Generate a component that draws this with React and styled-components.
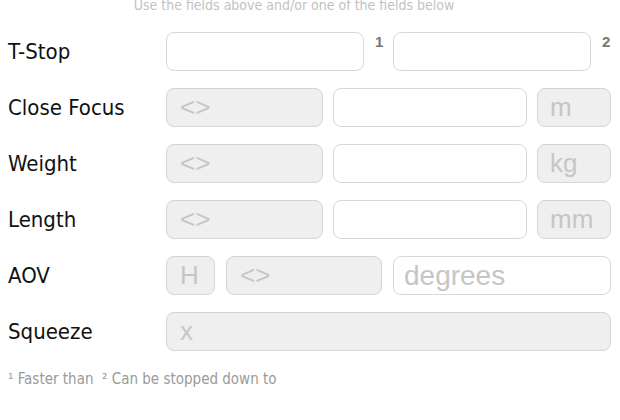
import React from "react";
import styled, { createGlobalStyle } from "styled-components";

const GlobalStyle = createGlobalStyle`
  html, body {
    margin: 0;
    padding: 0;
    background: #ffffff;
    overflow: hidden;
  }
`;

const labelFont = `"DejaVu Sans Condensed", "Liberation Sans", sans-serif`;
const fieldFont = `"Liberation Sans", Arial, sans-serif`;

const Page = styled.div`
  width: 620px;
  height: 420px;
  box-sizing: border-box;
  padding: 0 8px;
  font-family: ${labelFont};
  overflow: hidden;
`;

const Hint = styled.div`
  margin-top: -3px;
  padding-right: 32px;
  text-align: center;
  font-size: 14px;
  line-height: 17px;
  color: #c2c2c2;
`;

const Rows = styled.div`
  display: flex;
  flex-direction: column;
  gap: 17px;
  margin-top: 18px;
`;

const Row = styled.div`
  display: flex;
  align-items: center;
  height: 39px;
`;

const Label = styled.div`
  width: 158px;
  flex-shrink: 0;
  font-size: 22px;
  color: #111;
`;

const Fields = styled.div`
  display: flex;
  align-items: center;
  gap: ${(p) => p.gap ?? 10}px;
  height: 100%;
`;

const Field = styled.div`
  box-sizing: border-box;
  width: ${(p) => p.w}px;
  height: 100%;
  border: 1px solid ${(p) => (p.filled ? "#d5d5d5" : "#d8d8d8")};
  border-radius: 8px;
  background: ${(p) => (p.filled ? "#efefef" : "#ffffff")};
  display: flex;
  align-items: center;
  padding-left: ${(p) => p.pad ?? 13}px;
  font-family: ${fieldFont};
  font-size: ${(p) => p.size || 26}px;
  color: #c6c6c6;
  white-space: nowrap;
`;

const Sup = styled.span`
  align-self: flex-start;
  box-sizing: border-box;
  width: 29px;
  margin-top: 1px;
  padding-left: 11px;
  font-family: ${fieldFont};
  font-weight: bold;
  font-size: 15px;
  color: #777;
`;

const Note = styled.div`
  margin-top: 19px;
  font-size: 15px;
  color: #9a9a9a;
`;

export default function App() {
  return (
    <Page>
      <GlobalStyle />
      <Hint>Use the fields above and/or one of the fields below</Hint>
      <Rows>
        <Row>
          <Label>T-Stop</Label>
          <Fields gap={0}>
            <Field w={198} />
            <Sup>1</Sup>
            <Field w={198} />
            <Sup>2</Sup>
          </Fields>
        </Row>
        <Row>
          <Label>Close Focus</Label>
          <Fields>
            <Field w={157} filled>&lt;&gt;</Field>
            <Field w={194} />
            <Field w={74} filled pad={12}>m</Field>
          </Fields>
        </Row>
        <Row>
          <Label>Weight</Label>
          <Fields>
            <Field w={157} filled>&lt;&gt;</Field>
            <Field w={194} />
            <Field w={74} filled pad={12}>kg</Field>
          </Fields>
        </Row>
        <Row>
          <Label>Length</Label>
          <Fields>
            <Field w={157} filled>&lt;&gt;</Field>
            <Field w={194} />
            <Field w={74} filled pad={12}>mm</Field>
          </Fields>
        </Row>
        <Row>
          <Label>AOV</Label>
          <Fields gap={11}>
            <Field w={49} filled>H</Field>
            <Field w={156} filled>&lt;&gt;</Field>
            <Field w={218} pad={10} size={28}>degrees</Field>
          </Fields>
        </Row>
        <Row>
          <Label>Squeeze</Label>
          <Fields>
            <Field w={445} filled>x</Field>
          </Fields>
        </Row>
      </Rows>
      <Note>¹ Faster than &nbsp;² Can be stopped down to</Note>
    </Page>
  );
}
